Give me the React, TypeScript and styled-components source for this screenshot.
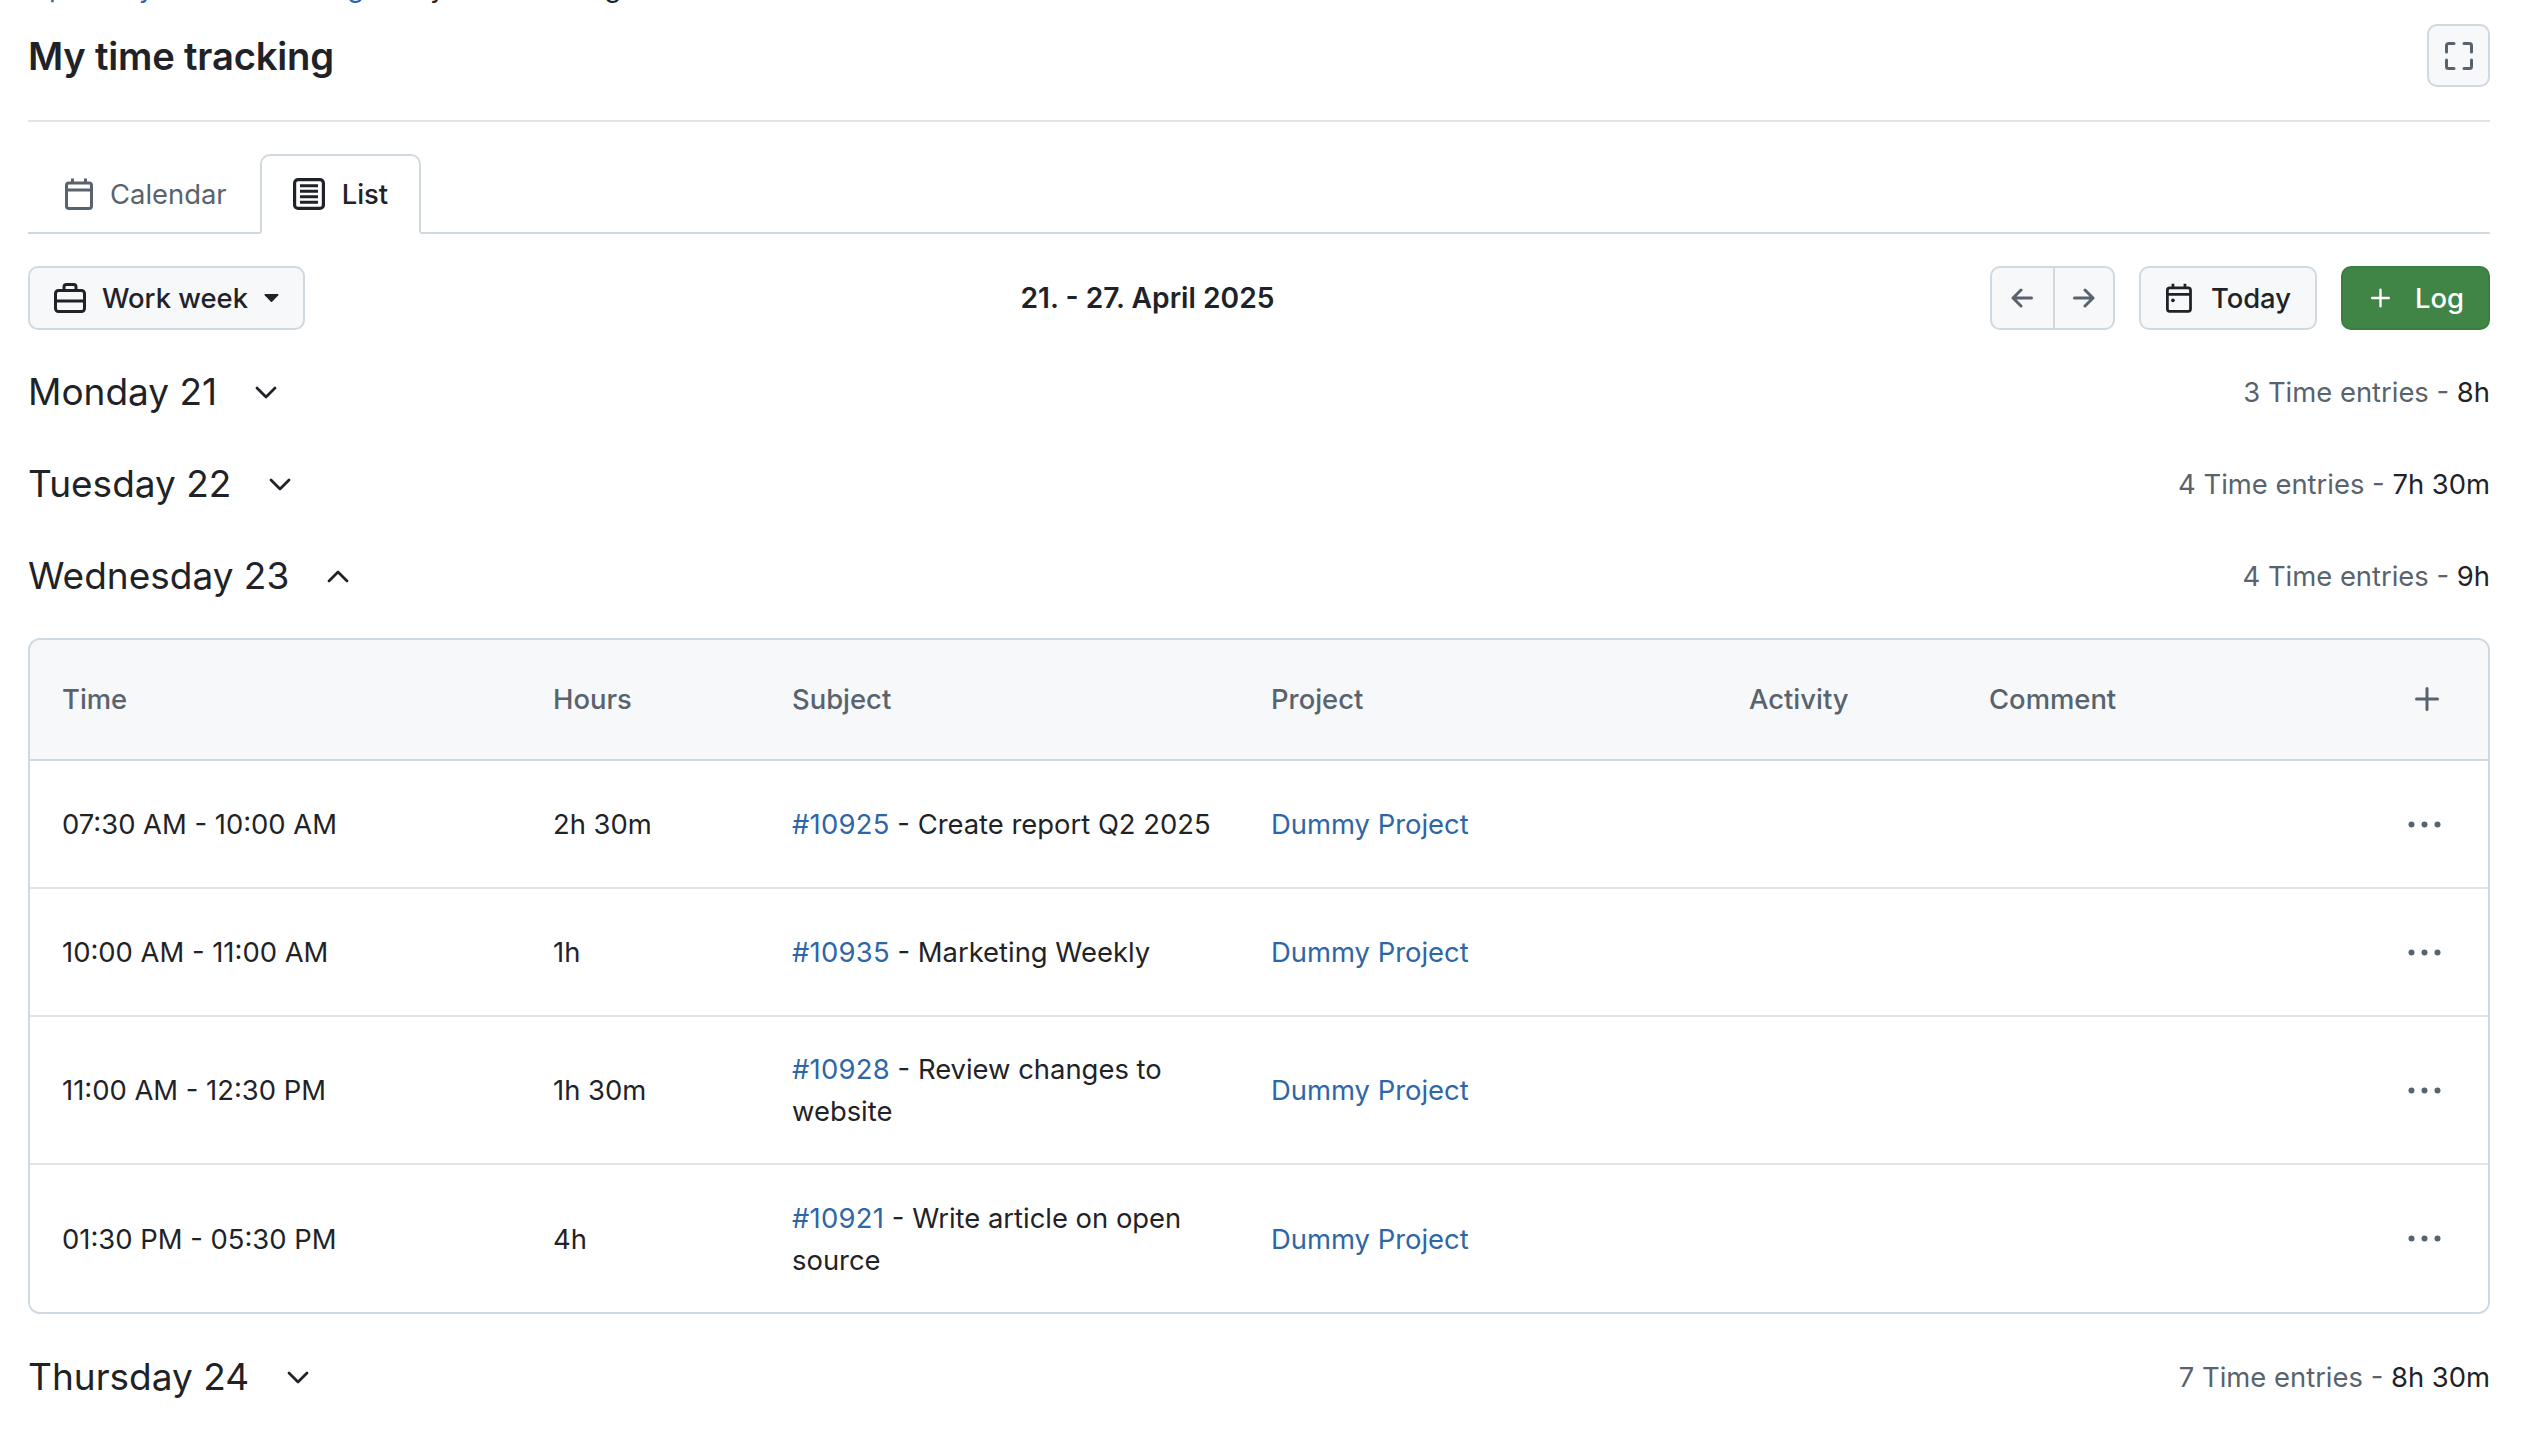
import React from "react";
import styled, { createGlobalStyle } from "styled-components";

const GlobalStyle = createGlobalStyle`
  html, body {
    margin: 0;
    height: 100%;
    background: #ffffff;
    overflow: hidden;
  }
  body {
    font-family: Inter, "Liberation Sans", sans-serif;
    font-size: 27.4px;
    line-height: 42px;
    color: #1f2328;
  }
`;

const Page = styled.div`
  padding: 0 52px 0 28px;
`;

const Crumbs = styled.div`
  display: flex;
  height: 42px;
  margin-top: -34px;
`;

const Crumb = styled.a`
  color: #2e66a6;
`;

const TrailCrumb = styled(Crumb)`
  margin-left: 33px;
`;

const CrumbCurrent = styled.span`
  margin-left: 41px;
`;

const PageHeader = styled.header`
  display: flex;
  align-items: center;
  justify-content: space-between;
  height: 63px;
  margin-top: 16px;
  padding-bottom: 33px;
  border-bottom: 2px solid #dfe4e9;
`;

const Title = styled.h1`
  margin: 0;
  font-size: 38.2px;
  line-height: 52px;
  font-weight: 600;
  letter-spacing: -0.2px;
`;

const Button = styled.button`
  display: inline-flex;
  align-items: center;
  height: 64px;
  padding: 0 24px;
  font: inherit;
  font-weight: 500;
  color: #1f2328;
  background: #f6f8fa;
  border: 2px solid #d1d9e0;
  border-radius: 10px;
`;

const IconButton = styled(Button)`
  width: 63px;
  height: 63px;
  padding: 0;
  justify-content: center;
`;

const TabBar = styled.nav`
  display: flex;
  align-items: flex-end;
  height: 78px;
  margin-top: 32px;
  padding-left: 4px;
  border-bottom: 2px solid #d1d9e0;
`;

const Tab = styled.a<{ $active?: boolean }>`
  display: flex;
  align-items: center;
  gap: 17px;
  height: 80px;
  box-sizing: border-box;
  margin-bottom: -2px;
  padding: 0 31px;
  border: 2px solid ${(p) => (p.$active ? "#d1d9e0" : "transparent")};
  border-bottom-color: ${(p) => (p.$active ? "#ffffff" : "transparent")};
  border-radius: 10px 10px 0 0;
  color: ${(p) => (p.$active ? "#1f2328" : "#59636e")};
  font-weight: ${(p) => (p.$active ? 500 : 400)};
`;

const Toolbar = styled.div`
  display: flex;
  align-items: center;
  justify-content: space-between;
  margin-top: 32px;
`;

const ModeButton = styled(Button)`
  width: 277px;
  justify-content: space-between;
`;

const RangeLabel = styled.div`
  font-size: 28.2px;
  font-weight: 600;
`;

const ToolbarActions = styled.div`
  display: flex;
  align-items: center;
  gap: 24px;
`;

const NavGroup = styled.div`
  display: flex;
  height: 64px;
  box-sizing: border-box;
  background: #f6f8fa;
  border: 2px solid #d1d9e0;
  border-radius: 10px;
`;

const NavArrow = styled.button`
  display: flex;
  align-items: center;
  justify-content: center;
  width: 60.5px;
  padding: 0;
  color: #59636e;
  background: none;
  border: none;
  & + & {
    border-left: 2px solid #d1d9e0;
  }
`;

const TodayButton = styled(Button)`
  gap: 19px;
  width: 178px;
  padding: 0 24px 0 25px;
`;

const LogButton = styled(Button)`
  gap: 25px;
  width: 149px;
  padding: 0 24px 0 28px;
  color: #ffffff;
  background: #408545;
  border-color: #3b7d40;
`;

const Days = styled.div`
  display: flex;
  flex-direction: column;
  gap: 32px;
  margin-top: 32px;
`;

const DayRow = styled.div`
  display: flex;
  align-items: center;
  justify-content: space-between;
  height: 60px;
`;

const DayTitle = styled.div`
  display: flex;
  align-items: center;
  gap: 38px;
  font-size: 37px;
  line-height: 60px;
`;

const DayChevron = styled.span`
  display: flex;
`;

const DayStats = styled.div`
  color: #59636e;
`;

const DayHours = styled.span`
  color: #1f2328;
`;

const TableCard = styled.div`
  overflow: hidden;
  margin-bottom: 1px;
  background: #f6f8fa;
  border: 2px solid #d1d9e0;
  border-radius: 12px;
`;

const Row = styled.div<{ $tall?: boolean }>`
  display: grid;
  grid-template-columns: 491px 239px 479px 478px 240px 1fr 96px;
  align-items: center;
  box-sizing: border-box;
  height: ${(p) => (p.$tall ? "148px" : "128px")};
  padding-left: 32px;
  background: #ffffff;
  border-bottom: 2px solid #dfe4e9;
  &:first-of-type {
    border-radius: 10px 10px 0 0;
  }
  &:last-of-type {
    border-bottom: none;
    height: 147px;
  }
`;

const HeadRow = styled(Row)`
  height: 121px;
  padding-bottom: 2px;
  color: #59636e;
  font-weight: 500;
  background: #f6f8fa;
  border-bottom: 2px solid #d1d9e0;
`;

const Subject = styled.div`
  padding-right: 32px;
`;

const Link = styled.a`
  color: #2e66a6;
`;

const IssueLink = styled(Link)`
  letter-spacing: 0.25px;
`;

const RowAction = styled.div<{ $inset: number }>`
  display: flex;
  padding-left: ${(p) => p.$inset}px;
  color: #59636e;
`;

const CalendarIcon = ({ dot }: { dot?: boolean }) => (
  <svg width="28" height="32" viewBox="0 0 28 32" fill="none" stroke="currentColor" strokeWidth="3" aria-hidden>
    <rect x="1.5" y="5" width="25" height="25.5" rx="2.5" />
    <path d="M1.5 12h25M7.5 0.5v5M20.5 0.5v5" />
    {dot && <circle cx="7.5" cy="18.5" r="2" fill="currentColor" stroke="none" />}
  </svg>
);

const ListIcon = () => (
  <svg width="32" height="32" viewBox="0 0 32 32" fill="none" stroke="currentColor" strokeWidth="3.2" aria-hidden>
    <rect x="1.6" y="1.6" width="28.8" height="28.8" rx="3.5" />
    <path d="M7 7.8h18M7 13.2h18M7 18.8h18M7 24.2h18" strokeWidth="3" />
  </svg>
);

const BriefcaseIcon = () => (
  <svg width="32" height="30" viewBox="0 0 32 30" fill="none" stroke="currentColor" strokeWidth="3" aria-hidden>
    <rect x="1.5" y="7.5" width="29" height="21" rx="3" />
    <path d="M1.5 18h29M10 7.5V4a2.5 2.5 0 0 1 2.5-2.5h7A2.5 2.5 0 0 1 22 4v3.5" />
  </svg>
);

const CaretIcon = () => (
  <svg width="15" height="8" viewBox="0 0 16 9" fill="currentColor" aria-hidden>
    <path d="M1 0h14c.8 0 1.2.9.7 1.5L8.7 8.6a1 1 0 0 1-1.4 0L.3 1.5C-.2.9.2 0 1 0z" />
  </svg>
);

const FullscreenIcon = () => (
  <svg width="28" height="28" viewBox="0 0 28 28" fill="none" stroke="#59636e" strokeWidth="3" strokeLinecap="round" aria-hidden>
    <path d="M1.5 10V3.5a2 2 0 0 1 2-2H9M19 1.5h5.5a2 2 0 0 1 2 2V10M26.5 18v6.5a2 2 0 0 1-2 2H19M9 26.5H3.5a2 2 0 0 1-2-2V18" />
  </svg>
);

const DotsIcon = () => (
  <svg width="33" height="7" viewBox="0 0 33 7" fill="currentColor" aria-hidden>
    <circle cx="3.5" cy="3.5" r="3" />
    <circle cx="16.5" cy="3.5" r="3" />
    <circle cx="29.5" cy="3.5" r="3" />
  </svg>
);

const PlusIcon = () => (
  <svg width="24" height="24" viewBox="0 0 24 24" fill="none" stroke="currentColor" strokeWidth="3" strokeLinecap="round" aria-hidden>
    <path d="M12 1.5v21M1.5 12h21" />
  </svg>
);

const ArrowIcon = ({ right }: { right?: boolean }) => (
  <svg width="22" height="20" viewBox="0 0 22 20" fill="none" stroke="currentColor" strokeWidth="3" strokeLinecap="round" strokeLinejoin="round" aria-hidden>
    <path d={right ? "M12 2l8 8-8 8M20 10H1.5" : "M10 2l-8 8 8 8M2 10h18.5"} />
  </svg>
);

const ChevronIcon = ({ up }: { up?: boolean }) => (
  <svg width="22" height="13" viewBox="0 0 22 13" fill="none" stroke="currentColor" strokeWidth="2.8" strokeLinecap="round" strokeLinejoin="round" aria-hidden>
    <path d={up ? "M2 11l9-9 9 9" : "M2 2l9 9 9-9"} />
  </svg>
);

type Entry = {
  time: string;
  hours: string;
  issue: string;
  subject: string;
  tall?: boolean;
};

const entries: Entry[] = [
  { time: "07:30 AM - 10:00 AM", hours: "2h 30m", issue: "#10925", subject: "Create report Q2 2025" },
  { time: "10:00 AM - 11:00 AM", hours: "1h", issue: "#10935", subject: "Marketing Weekly" },
  { time: "11:00 AM - 12:30 PM", hours: "1h 30m", issue: "#10928", subject: "Review changes to website", tall: true },
  { time: "01:30 PM - 05:30 PM", hours: "4h", issue: "#10921", subject: "Write article on open source", tall: true },
];

const Day = ({ name, stats, hours, open }: { name: string; stats: string; hours: string; open?: boolean }) => (
  <DayRow>
    <DayTitle>
      {name}
      <DayChevron>
        <ChevronIcon up={open} />
      </DayChevron>
    </DayTitle>
    <DayStats>
      {stats} - <DayHours>{hours}</DayHours>
    </DayStats>
  </DayRow>
);

export default function App() {
  return (
    <Page>
      <GlobalStyle />
      <Crumbs>
        <Crumb>Operately</Crumb>
        <TrailCrumb>Time tracking</TrailCrumb>
        <CrumbCurrent>My time tracking</CrumbCurrent>
      </Crumbs>
      <PageHeader>
        <Title>My time tracking</Title>
        <IconButton aria-label="Fullscreen">
          <FullscreenIcon />
        </IconButton>
      </PageHeader>
      <TabBar>
        <Tab>
          <CalendarIcon />
          Calendar
        </Tab>
        <Tab $active>
          <ListIcon />
          List
        </Tab>
      </TabBar>
      <Toolbar>
        <ModeButton>
          <BriefcaseIcon />
          Work week
          <CaretIcon />
        </ModeButton>
        <RangeLabel>21. - 27. April 2025</RangeLabel>
        <ToolbarActions>
          <NavGroup>
            <NavArrow aria-label="Previous">
              <ArrowIcon />
            </NavArrow>
            <NavArrow aria-label="Next">
              <ArrowIcon right />
            </NavArrow>
          </NavGroup>
          <TodayButton>
            <CalendarIcon dot />
            Today
          </TodayButton>
          <LogButton>
            <PlusIcon />
            Log
          </LogButton>
        </ToolbarActions>
      </Toolbar>
      <Days>
        <Day name="Monday 21" stats="3 Time entries" hours="8h" />
        <Day name="Tuesday 22" stats="4 Time entries" hours="7h 30m" />
        <Day name="Wednesday 23" stats="4 Time entries" hours="9h" open />
        <TableCard>
          <HeadRow>
            <div>Time</div>
            <div>Hours</div>
            <div>Subject</div>
            <div>Project</div>
            <div>Activity</div>
            <div>Comment</div>
            <RowAction $inset={23}>
              <PlusIcon />
            </RowAction>
          </HeadRow>
          {entries.map((entry) => (
            <Row key={entry.issue} $tall={entry.tall}>
              <div>{entry.time}</div>
              <div>{entry.hours}</div>
              <Subject>
                <IssueLink>{entry.issue}</IssueLink> - {entry.subject}
              </Subject>
              <Link>Dummy Project</Link>
              <div />
              <div />
              <RowAction $inset={16}>
                <DotsIcon />
              </RowAction>
            </Row>
          ))}
        </TableCard>
        <Day name="Thursday 24" stats="7 Time entries" hours="8h 30m" />
      </Days>
    </Page>
  );
}
